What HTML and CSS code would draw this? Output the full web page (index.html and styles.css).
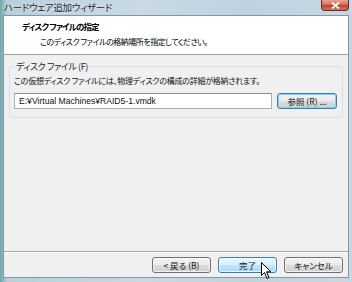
FILE: index.html
```html
<!DOCTYPE html>
<html lang="ja">
<head>
  <meta charset="UTF-8">
  <title>ハードウェア追加ウィザード</title>
  <link rel="stylesheet" href="styles.css">
</head>
<body>
  <div class="window">
    <div class="titlebar">
      <span class="title">ハードウェア追加ウィザード</span>
      <button class="close-btn">
        <svg width="9" height="7" viewBox="0 0 9 7"><path d="M1 0.5 L8 6.5 M8 0.5 L1 6.5" stroke="#fff" stroke-width="1.8"/></svg>
      </button>
    </div>

    <div class="client">
      <div class="wiz-header">
        <h1>ディスク ファイルの指定</h1>
        <p>このディスク ファイルの格納場所を指定してください。</p>
      </div>

      <div class="wiz-body">
        <fieldset class="group">
          <legend>ディスク ファイル (F)</legend>
          <p class="desc">この仮想ディスク ファイルには、物理ディスクの構成の詳細が格納されます。</p>
          <div class="file-row">
            <input class="path" type="text" value="E:¥Virtual Machines¥RAID5-1.vmdk">
            <button class="btn btn-focus">参照 (R) ...</button>
          </div>
        </fieldset>
      </div>

      <div class="wiz-footer">
        <button class="btn">&lt; 戻る (B)</button>
        <button class="btn btn-hover">完了</button>
        <button class="btn btn-cancel">キャンセル</button>
      </div>
    </div>

    <svg class="cursor" width="12" height="18" viewBox="0 0 12 18">
      <path d="M0.5 0.5 L0.5 13.5 L3.5 10.5 L6 16.5 L8 15.5 L5.5 9.8 L9.8 9.8 Z" fill="#fff" stroke="#000" stroke-width="1"/>
    </svg>
  </div>
</body>
</html>
```

FILE: styles.css
```css
body { margin:0; padding:0; width:352px; height:282px; overflow:hidden; font-family:"Noto Sans CJK JP", "Liberation Sans", sans-serif; font-feature-settings:"palt"; }
.window { position:relative; width:352px; height:282px; box-sizing:border-box; display:flex; flex-direction:column; padding:0 3px 4px 3px; background:linear-gradient(90deg, #6fa7a6 0%, #b9cfdc 2%, #c8d9e5 40%, #bfd2df 70%, #c6d8e4 100%); }
.titlebar { height:15px; display:flex; align-items:flex-start; justify-content:space-between; }
.title { font-size:9.5px; line-height:15px; color:#1c2630; padding-left:1px; letter-spacing:-0.3px; text-shadow:0 0 4px rgba(255,255,255,0.9); }
.close-btn { width:28px; height:11px; padding:0; border:1px solid #6b2a20; border-top:none; border-radius:0 0 4px 4px; background:linear-gradient(#e8a593 0%, #d4705a 45%, #c0432b 55%, #d6775e 100%); display:flex; align-items:center; justify-content:center; }
.close-btn svg { display:block; }

.client { flex:1; display:flex; flex-direction:column; background:#f0f0f0; border:1px solid #8397a6; }
.wiz-header { height:39px; box-sizing:border-box; background:#fff; border-bottom:1px solid #a0a0a0; padding:3px 0 0 18px; }
.wiz-header h1 { margin:0; font-size:8.5px; font-weight:bold; line-height:14px; color:#000; letter-spacing:-0.9px; }
.wiz-header p { margin:3px 0 0 18px; font-size:8px; line-height:12px; color:#000; letter-spacing:-0.5px; }

.wiz-body { flex:1; padding:5px 5px 0 5px; }
.group { margin:0; padding:2px 5px 8px 4px; border:1px solid #d5dfe5; border-radius:3px; }
.group legend { padding:0 1px; margin-left:1px; font-size:9px; color:#1e1e1e; letter-spacing:-0.4px; }
.desc { margin:0 0 6px 0; font-size:8px; line-height:12px; color:#111; letter-spacing:-0.25px; }
.file-row { display:flex; gap:5px; align-items:center; }
.path { flex:1; height:16px; box-sizing:border-box; margin:0; padding:0 4px; border:1px solid #abadb3; border-top-color:#8b8e96; background:#fff; font-family:"Liberation Sans", sans-serif; font-size:8.6px; color:#111; outline:none; }

.btn { height:16px; box-sizing:border-box; padding:0; border:1px solid #707070; border-radius:3px; background:linear-gradient(#f2f2f2 0%, #ebebeb 48%, #dddddd 52%, #cfcfcf 100%); font-family:"Noto Sans CJK JP", "Liberation Sans", sans-serif; font-feature-settings:"palt"; font-size:8.5px; line-height:14px; color:#111; box-shadow:inset 0 0 0 1px rgba(255,255,255,0.7); }
.btn-focus { width:60px; border-color:#3c7fb1; box-shadow:inset 0 0 0 1px #7ed2f6; }
.wiz-footer { height:25px; border-top:1px solid #a8a8a8; box-shadow:inset 0 1px 0 #fff; display:flex; justify-content:flex-end; align-items:center; gap:7px; padding:0 5px 0 0; }
.wiz-footer .btn { width:59px; }
.btn-hover { border-color:#3c7fb1; background:linear-gradient(#eaf6fd 0%, #d9f0fc 48%, #bee6fd 52%, #a7d9f5 100%); }

.cursor { position:absolute; left:261px; top:262px; }
```
